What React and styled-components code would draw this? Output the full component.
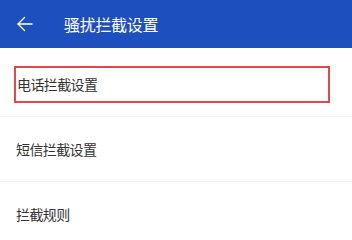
import styled, { createGlobalStyle } from 'styled-components';

const GlobalStyle = createGlobalStyle`
  body {
    margin: 0;
    background-color: #fff;
    font-family: 'Noto Sans CJK SC', 'Noto Sans', sans-serif;
  }
`;

const Page = styled.div`
  display: flex;
  flex-direction: column;
  width: 352px;
  height: 223px;
  overflow: hidden;
  background-color: #fff;
`;

const Header = styled.header`
  display: flex;
  align-items: center;
  flex-shrink: 0;
  height: 48px;
  padding-left: 16px;
  background-color: #1e4fbf;
  color: #fff;
`;

const BackButton = styled.button`
  display: flex;
  align-items: center;
  justify-content: center;
  width: 18px;
  height: 18px;
  margin-right: 30px;
  padding: 0;
  border: none;
  background: none;
  cursor: pointer;
`;

const Title = styled.h1`
  margin: 0;
  font-size: 16px;
  font-weight: 400;
  line-height: 22px;
  letter-spacing: -0.3px;
`;

const List = styled.ul`
  margin: 0;
  padding: 4px 0 0;
  list-style: none;
`;

const Item = styled.li`
  display: flex;
  align-items: center;
  height: 65px;
  padding: ${(props) => (props.highlighted ? '0 22px 0 14px' : '0 16px')};
  border-bottom: 1px solid #f4f4f4;
  box-sizing: border-box;
  font-size: 14px;
  line-height: 20px;
  color: #333;
  letter-spacing: -0.6px;
`;

const Highlight = styled.div`
  display: flex;
  align-items: center;
  flex: 1;
  height: 37px;
  padding-left: 1px;
  border: 2px solid #e8474a;
  box-sizing: border-box;
`;

const items = ['电话拦截设置', '短信拦截设置', '拦截规则'];

const App = () => {
  return (
    <Page>
      <GlobalStyle />
      <Header>
        <BackButton type="button" aria-label="返回">
          <svg width="18" height="18" viewBox="0 0 18 18" fill="none" stroke="#fff" strokeWidth="1.4" strokeLinecap="round" strokeLinejoin="round">
            <path d="M16 9H2" />
            <path d="M8.5 2.5L2 9l6.5 6.5" />
          </svg>
        </BackButton>
        <Title>骚扰拦截设置</Title>
      </Header>
      <List>
        {items.map((label, index) => (
          <Item key={label} highlighted={index === 0}>
            {index === 0 ? <Highlight>{label}</Highlight> : label}
          </Item>
        ))}
      </List>
    </Page>
  );
};

export default App;
